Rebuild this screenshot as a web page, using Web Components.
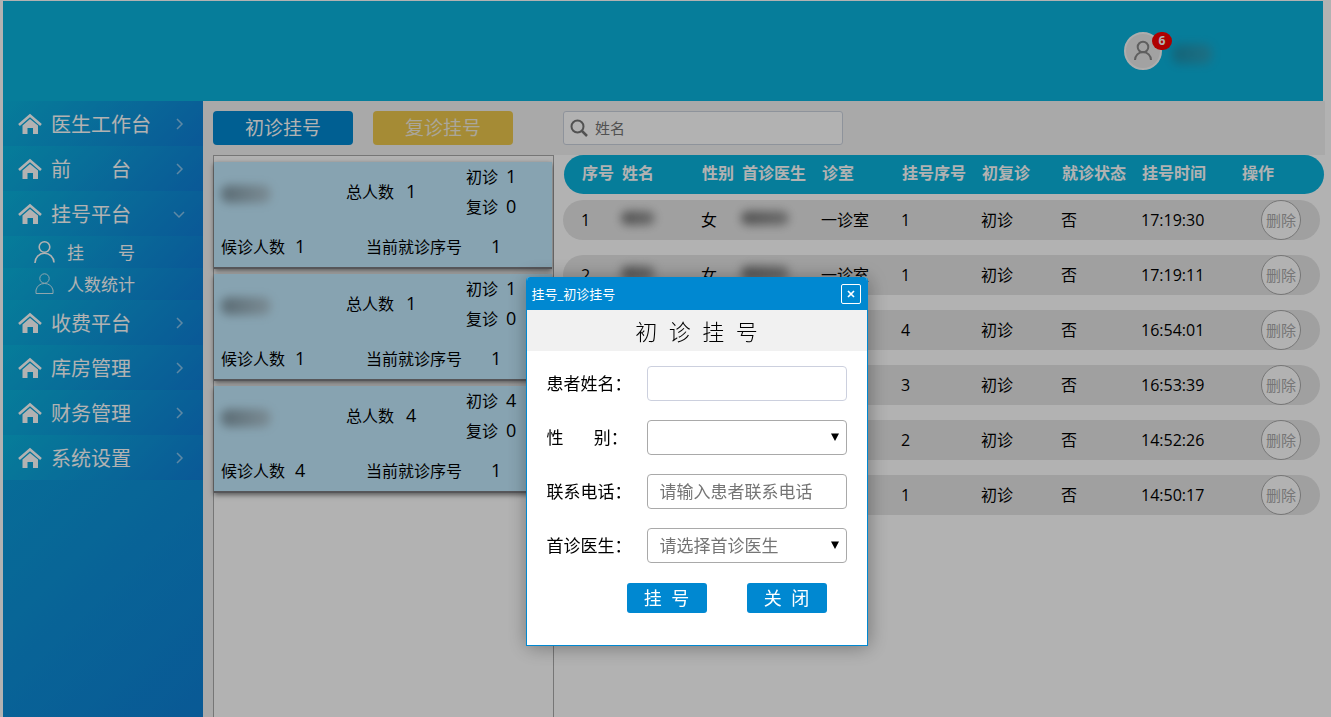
<!DOCTYPE html>
<html lang="zh-CN">
<head>
<meta charset="utf-8">
<title>挂号平台</title>
<style>
html, body { margin: 0; height: 100%; }
body { font: 16px/24px "Open Sans", "Noto Sans CJK SC", sans-serif; color: #000; background: #fff; overflow: hidden; }
</style>
</head>
<body>
<clinic-app></clinic-app>
<script>
const BASE = `*{box-sizing:border-box} button,input,select{font:inherit;margin:0} `;
const define = (name, css, html) => customElements.define(name, class extends HTMLElement {
  connectedCallback() {
    if (this.shadowRoot) return;
    const root = this.attachShadow({ mode: 'open' });
    root.innerHTML = `<style>${BASE}${css}</style>${typeof html === 'function' ? html(this) : html}`;
  }
});

/* Blurred stand-in for a private name */
define('private-name', `
  :host{display:block;width:40px;height:24px}
  i{display:block;height:var(--h,14px);margin:5px 0;border-radius:8px;filter:blur(5px);
    background:linear-gradient(90deg,var(--from,#777),var(--to,#999))}`, `<i></i>`);

define('nav-item', `
  :host{display:block}
  a{display:flex;align-items:center;height:45px;padding:0 18px 0 15px;color:#fff;font-size:20px;line-height:30px;
    text-decoration:none;background:linear-gradient(135deg,#0ab3dd,#0f7fd8);white-space:pre}
  span{flex:1;margin-left:9px;padding-top:2px}
  :host([sub]) a{height:32px;padding-left:24px;font-size:17px}
  :host([sub]) span{margin-left:12px}
  svg{flex:none;fill:none;stroke:#fff}
  .chev{opacity:.5}`,
  el => {
    const lead = !el.hasAttribute('sub')
      ? `<svg width="24" height="24" viewBox="0 0 24 24"><path d="M2 13 L13 3.5 L24 13" transform="translate(-1 0)" stroke-width="2.6"/><path d="M4.5 13.5 L12 7 L20 13.5 V22 H15 V16 H9.5 V22 H4.5Z" fill="#fff" stroke="none"/></svg>`
      : el.getAttribute('sub') === 'open'
      ? `<svg width="28" height="24" viewBox="0 0 28 24"><circle cx="17.500" cy="7" r="5.300" stroke-width="1.600"/><path d="M8 23a9.500 9.500 0 0 1 19-.5" stroke-width="1.600"/></svg>`
      : `<svg width="28" height="24" viewBox="0 0 28 24" opacity=".8"><circle cx="17.500" cy="6.500" r="4.700"/><path d="M9 21.500V18q2-6.500 8.500-6.500T26 18V21.500Z"/></svg>`;
    const dir = el.getAttribute('dir-icon') === 'down' ? 'M1 4l5 5 5-5' : 'M4 1l5 5-5 5';
    const chev = el.hasAttribute('sub') ? '' : `<svg class="chev" width="12" height="12" viewBox="0 0 12 12"><path d="${dir}" stroke-width="1.500"/></svg>`;
    return `<a href="#">${lead}<span><slot></slot></span>${chev}</a>`;
  });

define('side-nav', `
  :host{display:block;flex:none;width:200px;background:linear-gradient(135deg,#0ab3dd,#0d80d6)}
  nav{display:block}`, `<nav>
  <nav-item>医生工作台</nav-item>
  <nav-item>前　　台</nav-item>
  <nav-item dir-icon="down">挂号平台</nav-item>
  <nav-item sub="open">挂　　号</nav-item>
  <nav-item sub="stats">人数统计</nav-item>
  <nav-item>收费平台</nav-item>
  <nav-item>库房管理</nav-item>
  <nav-item>财务管理</nav-item>
  <nav-item>系统设置</nav-item></nav>`);

define('top-bar', `
  :host{display:flex;align-items:center;justify-content:flex-end;flex:none;height:100px;margin-right:8px;padding-right:111px;background:#0ab3dd}
  .avatar{position:relative;width:38px;height:38px;padding:0;border:2px solid #f8f8f8;border-radius:50%;background:#e8e8e8}
  svg{display:block;margin:auto;fill:none;stroke:#888;stroke-width:2}
  b{position:absolute;left:26px;top:-2px;width:20px;height:18px;border-radius:9px;background:#fb0000;color:#fff;font-size:12px;line-height:18px;text-align:center}
  private-name{width:40px;margin-left:10px;opacity:.3;--h:20px;--from:#444;--to:#777}`, `
  <button class="avatar" aria-label="用户"><svg width="22" height="22" viewBox="0 0 22 22"><circle cx="11" cy="7" r="5.300"/><path d="M3 20a8 8 0 0 1 16 0"/></svg><b>6</b></button>
  <private-name></private-name>`);

define('action-button', `
  :host{display:block;width:140px}
  button{display:block;width:100%;height:34px;padding:0;border:0;border-radius:4px;background:#0088d1;color:#fff;font-size:19px;line-height:34px}
  :host([tone=gold]) button{background:#ecc74c;color:#f4eede}
  :host([small]){width:80px}
  :host([small]) button{height:30px;font-size:18px;line-height:30px;border-radius:3px}`,
  `<button type="button"><slot></slot></button>`);

define('doctor-card', `
  :host{display:block;height:107px;margin-bottom:5px;background:#c2eafe;border-bottom:2px solid #7c7c80;box-shadow:0 2px 5px rgba(0,0,0,.5)}
  .top{display:flex;align-items:center;height:60px}
  private-name{flex:none;width:50px;margin:0 75px 0 7px;opacity:.4;--h:18px;--from:#222;--to:#999}
  .total{flex:none;width:120px}
  .kinds{line-height:30px}
  .foot{display:flex;align-items:center;height:45px;padding:4px 0 0 7px}
  .wait{flex:none;width:145px}
  b{margin-left:10px;font-weight:400;font-size:18px;line-height:20px}
  .total b{margin-left:12px}
  .kinds b{margin-left:8px}
  .now b{margin-left:29px}`,
  el => { const a = n => el.getAttribute(n); return `
  <div class="top"><private-name></private-name><div class="total">总人数<b>${a('total')}</b></div>
  <div class="kinds"><div>初诊<b>${a('first')}</b></div><div>复诊<b>${a('again')}</b></div></div></div>
  <div class="foot"><div class="wait">候诊人数<b>${a('waiting')}</b></div><div class="now">当前就诊序号<b>${a('current')}</b></div></div>`; });

define('search-box', `
  :host{display:flex;align-items:center;width:280px;height:34px;padding-left:6px;border:1px solid #ccd3df;border-radius:3px;background:#fff}
  svg{flex:none;fill:none;stroke:#757575;stroke-width:2}
  input{flex:1;min-width:0;height:32px;padding:0 7px;border:0;background:none;font-size:15px;outline:0}
  input::placeholder{color:#757575}`, `
  <svg width="18" height="18" viewBox="0 0 18 18"><circle cx="7.500" cy="7.500" r="6"/><path d="M12 12l5 5" stroke-width="2.500"/></svg>
  <input type="search" placeholder="姓名" aria-label="姓名">`);

define('visit-table', `
  :host{display:block;padding-left:9px}
  table,thead,tbody{display:block}
  tr{display:grid;grid-template-columns:40px 80px 40px 80px 80px 80px 80px 80px 100px 1fr;align-items:center;padding-left:18px}
  th,td{padding:0;text-align:left;white-space:nowrap}
  thead tr{height:39px;margin:0 7px 6px 1px;padding-bottom:3px;border-radius:20px;background:#0ab3dd;color:#fff}
  tbody tr{height:40px;margin:0 11px 15px 0;border-radius:20px;background:#e6e6e6}
  td button{display:block;width:40px;height:40px;margin-left:20px;padding:0;border:1px solid #aaa;border-radius:50%;background:#fff;color:#aaa;font-size:15px}
  private-name{width:34px}
  .doc{width:48px}`,
  () => {
    const heads = ['序号','姓名','性别','首诊医生','诊室','挂号序号','初复诊','就诊状态','挂号时间','操作'];
    const name = '<private-name></private-name>', doc = '<private-name class="doc"></private-name>';
    const rows = [
      ['1',name,'女',doc,'一诊室','1','初诊','否','17:19:30'],
      ['2',name,'女',doc,'一诊室','1','初诊','否','17:19:11'],
      ['','','','','','4','初诊','否','16:54:01'],
      ['','','','','','3','初诊','否','16:53:39'],
      ['','','','','','2','初诊','否','14:52:26'],
      ['','','','','','1','初诊','否','14:50:17']];
    return `<table><thead><tr>${heads.map(h => `<th scope="col">${h}</th>`).join('')}</tr></thead><tbody>${
      rows.map(r => `<tr>${r.map(c => `<td>${c}</td>`).join('')}<td><button type="button">删除</button></td></tr>`).join('')
    }</tbody></table>`;
  });

define('form-row', `
  :host{display:flex;align-items:center;height:35px;font-size:17px}
  label{flex:none;width:100px;white-space:pre}
  .box{position:relative;flex:1}
  input,select{display:block;width:100%;height:35px;padding:0 12px;border:1px solid #a9a9a9;border-radius:4px;background:#fff;color:#757575;appearance:none;outline:0}
  input::placeholder{color:#757575}
  :host([plain]) input{border-color:#ccd0de}
  svg{position:absolute;right:8px;top:13px;pointer-events:none}`,
  el => { const hint = el.getAttribute('hint') || ''; const label = el.getAttribute('label');
    return `<label for="f">${label}</label><div class="box">${el.hasAttribute('choice')
      ? `<select id="f"><option>${hint}</option></select><svg width="8" height="8" viewBox="0 0 8 8"><path d="M0 0.500H8L4 8Z"/></svg>`
      : `<input id="f" type="text" placeholder="${hint}">`}</div>`; });

define('register-dialog', `
  :host{position:fixed;inset:0;display:block;background:rgba(0,0,0,.3)}
  section{position:absolute;left:calc(50% - 140px);top:277px;width:342px;border:1px solid #0088d1;border-top:0;border-radius:4px 4px 0 0;background:#fff;box-shadow:1px 1px 20px rgba(0,0,0,.35);overflow:hidden}
  header{display:flex;align-items:center;justify-content:space-between;height:33px;padding:0 6px 0 5px;background:#0088d1;color:#fff;font-size:13px}
  .close{display:flex;align-items:center;justify-content:center;width:20px;height:20px;padding:0;border:1px solid #fff;border-radius:2px;background:none}
  .close svg{flex:none;stroke:#fff;stroke-width:1.7}
  h1{margin:0;height:41px;background:#f1f1f1;font-size:22px;line-height:42px;font-weight:300;text-align:center;white-space:pre}
  form{display:grid;gap:19px;padding:15px 20px 20px}
  footer{display:flex;justify-content:flex-end;gap:40px;padding:0 40px 32px 0}`, `
  <section role="dialog" aria-label="初诊挂号">
  <header>挂号_初诊挂号<button class="close" type="button" aria-label="关闭"><svg width="8" height="8" viewBox="0 0 8 8"><path d="M1 1l6 6M7 1l-6 6"/></svg></button></header>
  <h1>初&nbsp;&nbsp;诊&nbsp;&nbsp;挂&nbsp;&nbsp;号</h1>
  <form><form-row plain label="患者姓名："></form-row>
  <form-row choice label="性　&nbsp;&nbsp;&nbsp;别："></form-row>
  <form-row label="联系电话：" hint="请输入患者联系电话"></form-row>
  <form-row choice label="首诊医生：" hint="请选择首诊医生"></form-row></form>
  <footer><action-button small>挂&nbsp;&nbsp;号</action-button><action-button small>关&nbsp;&nbsp;闭</action-button></footer>
  </section>`);

define('clinic-app', `
  :host{display:flex;flex-direction:column;height:100vh;padding:1px 0 0 3px}
  .body{display:flex;flex:1;min-height:0}
  main{display:flex;flex-direction:column;flex:1;min-width:0;padding-left:10px;background:linear-gradient(90deg,#f2f2f2 calc(100% - 6px),#fff 0)}
  .tools{display:flex;align-items:center;gap:20px;height:54px;flex:none}
  search-box{margin-left:30px}
  .work{display:flex;flex:1;min-height:0}
  .cards{flex:none;width:341px;padding:6px 1px 0 0;border:1px solid #a9a9a9;border-bottom:0;background:#fff}
  visit-table{flex:1;min-width:0;background:#fff}`, `
  <top-bar></top-bar>
  <div class="body"><side-nav></side-nav>
  <main><div class="tools"><action-button>初诊挂号</action-button><action-button tone="gold">复诊挂号</action-button><search-box></search-box></div>
  <div class="work"><div class="cards">
  <doctor-card total="1" first="1" again="0" waiting="1" current="1"></doctor-card>
  <doctor-card total="1" first="1" again="0" waiting="1" current="1"></doctor-card>
  <doctor-card total="4" first="4" again="0" waiting="4" current="1"></doctor-card></div>
  <visit-table></visit-table></div></main></div>
  <register-dialog></register-dialog>`);
</script>
</body>
</html>
